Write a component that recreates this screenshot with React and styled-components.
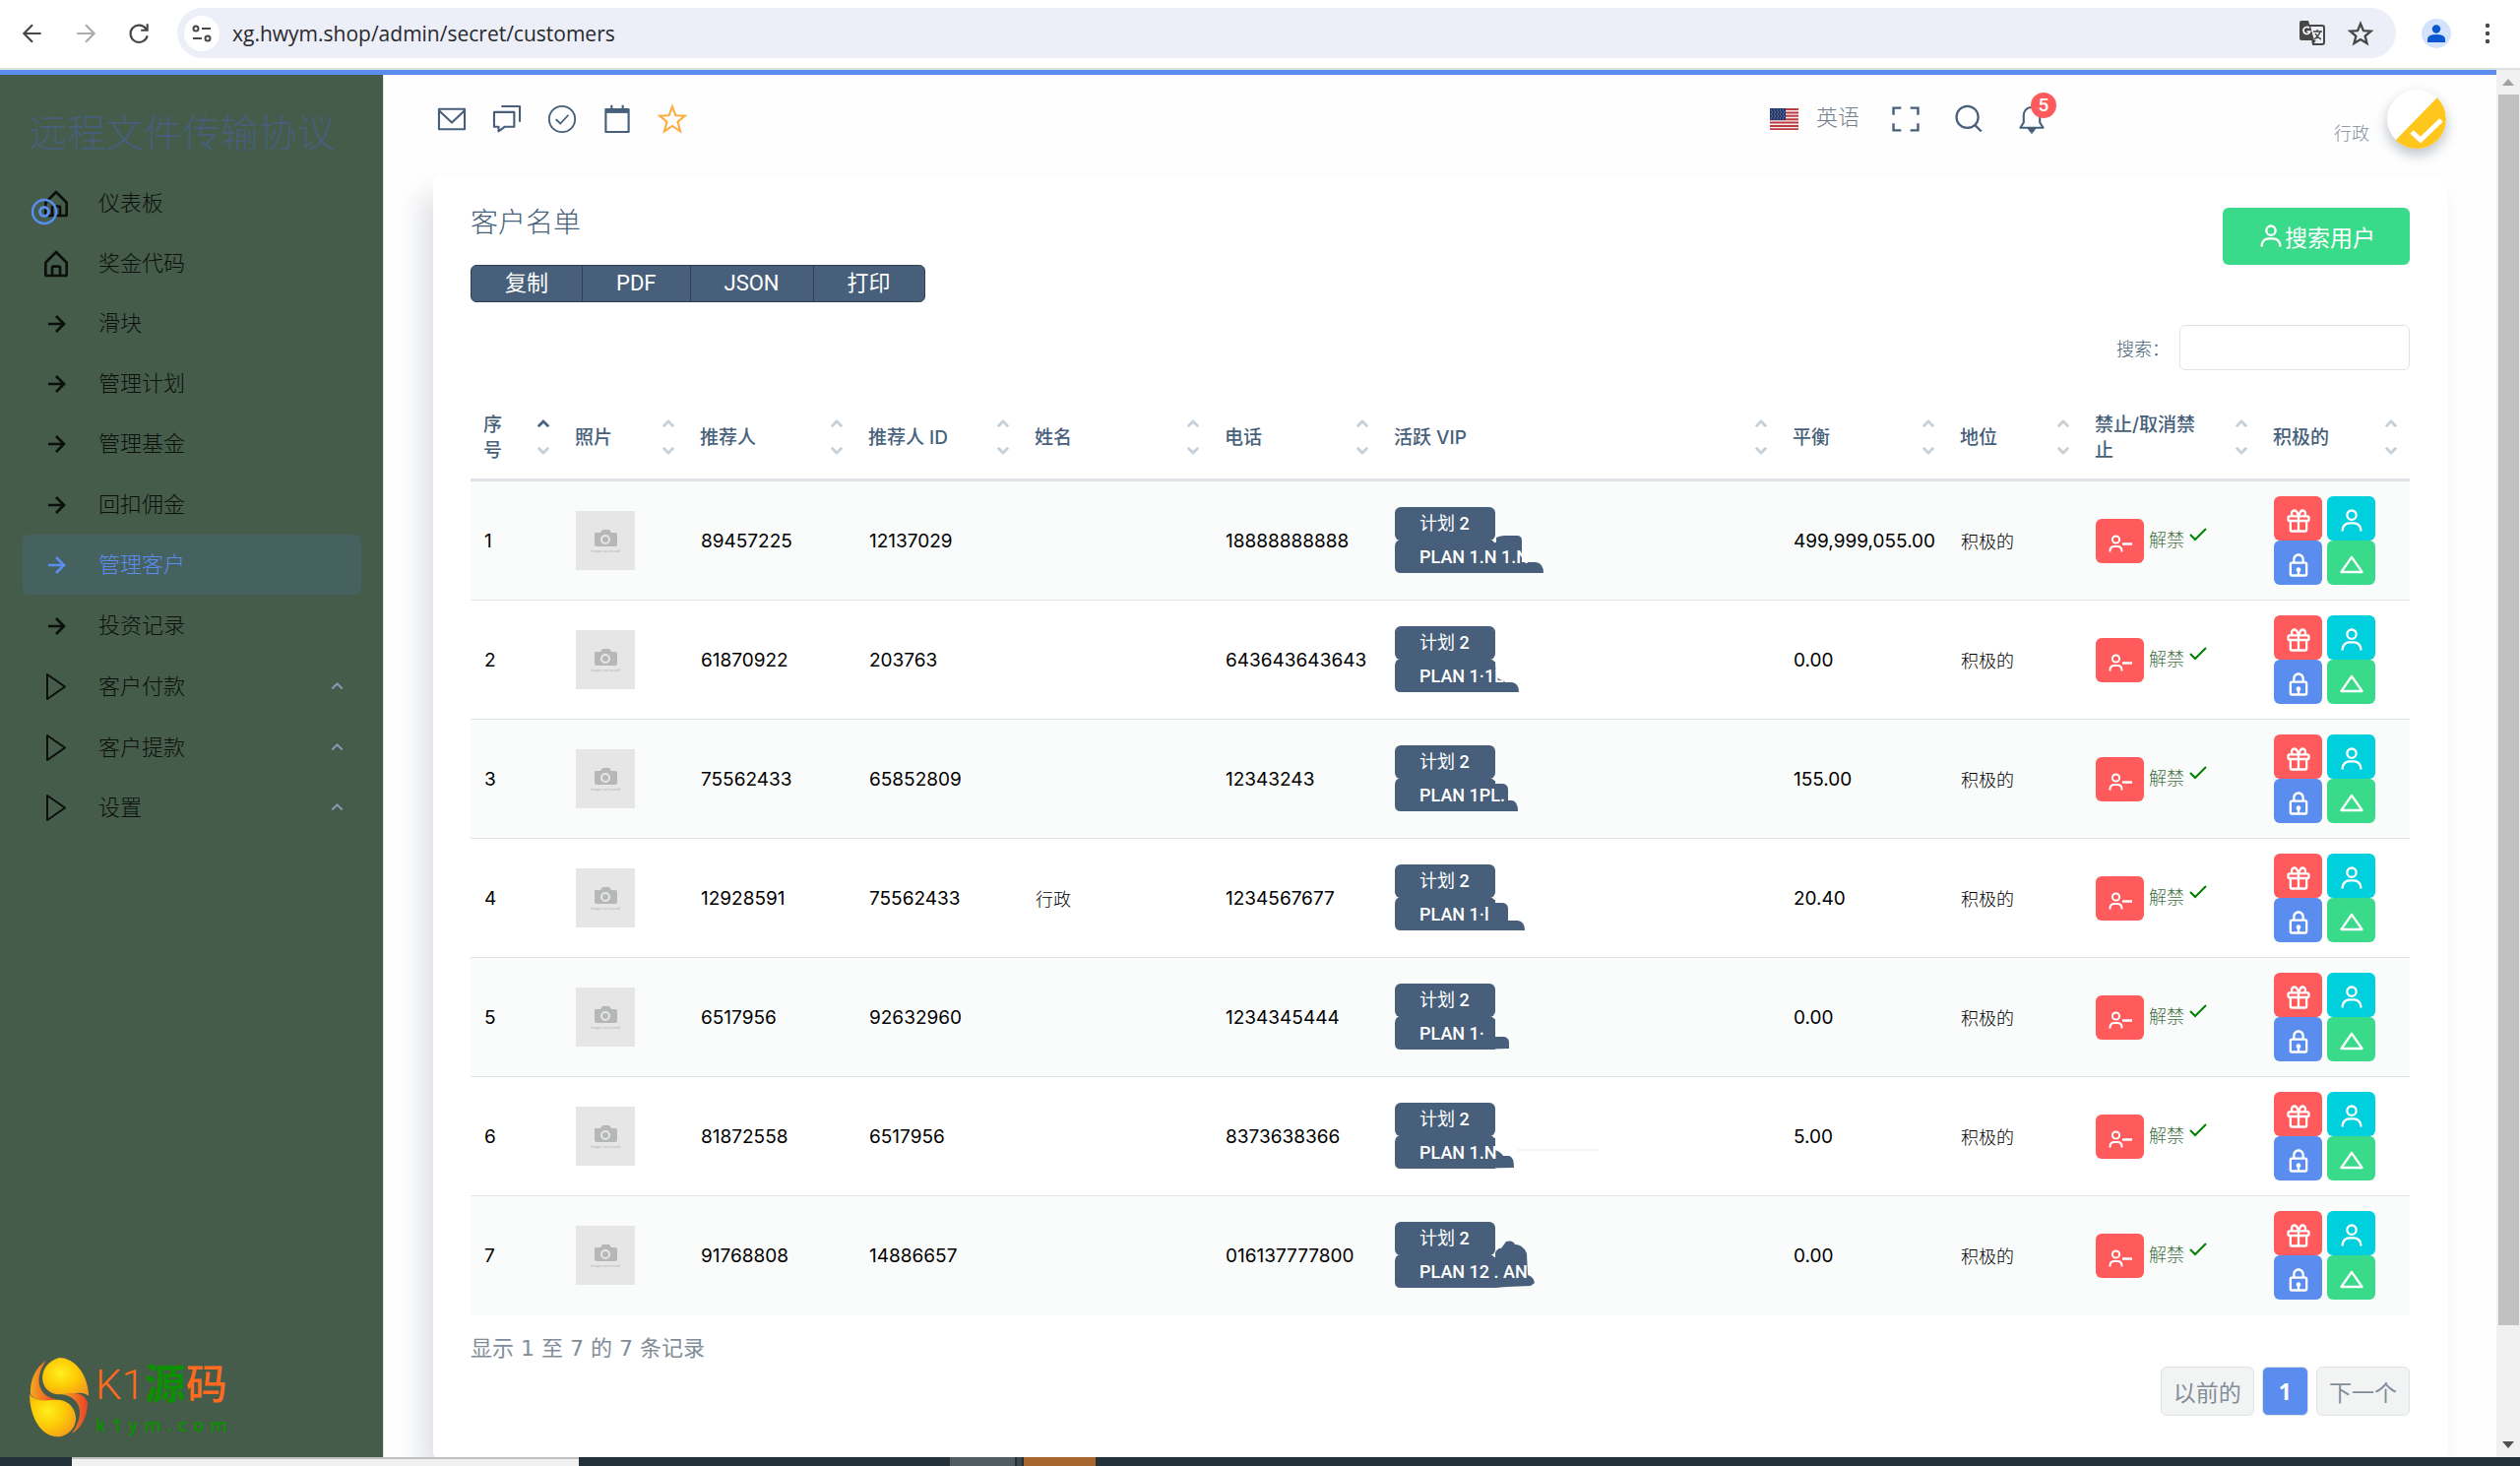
import React, { useState } from "react";
import styled, { createGlobalStyle } from "styled-components";
import {
  BiGift,
  BiUser,
  BiLock,
  BiUpArrow,
  BiRightArrowAlt,
  BiHomeAlt,
  BiChevronUp,
  BiChevronDown,
} from "react-icons/bi";

const GlobalStyle = createGlobalStyle`
  * {
    box-sizing: border-box;
  }
  body {
    margin: 0;
    background: #fff;
    color: #475f7b;
    font-family: Roboto, "Noto Sans CJK SC", sans-serif;
    font-size: 22px;
    font-weight: 300;
  }
  button,
  input {
    font: inherit;
    color: inherit;
  }
  button {
    border: 0;
    padding: 0;
    background: none;
    cursor: pointer;
  }
  a {
    color: inherit;
    text-decoration: none;
  }
  svg {
    display: block;
    flex-shrink: 0;
  }
`;

const Screen = styled.div`
  display: flex;
  flex-direction: column;
  height: 100vh;
  overflow: hidden;
`;

/* browser bar */
const BrowserBar = styled.header`
  display: flex;
  align-items: center;
  height: 71px;
  flex-shrink: 0;
  padding: 0 22px 2px 20px;
  background: #fff;
  border-bottom: 2px solid #dfe3e0;
  color: #474747;
`;
const BrowserButton = styled.button`
  display: flex;
  justify-content: center;
  width: 54px;
  margin-left: ${props => (props.first ? "-14px" : "0")};
  opacity: ${props => (props.disabled ? 0.45 : 1)};
`;
const AddressBar = styled.div`
  display: flex;
  align-items: center;
  flex: 1;
  height: 51px;
  margin-left: 12px;
  padding: 0 22px 0 7px;
  border-radius: 26px;
  background: #eceef8;
`;
const SiteInfo = styled.button`
  display: flex;
  align-items: center;
  justify-content: center;
  width: 36px;
  height: 36px;
  border-radius: 50%;
  background: #fff;
`;
const Address = styled.input`
  flex: 1;
  min-width: 0;
  margin-left: 13px;
  padding: 0;
  border: 0;
  outline: none;
  background: none;
  color: #28292c;
  font-family: "Open Sans", sans-serif;
  font-size: 21px;
  font-weight: 400;
`;
const AddressActions = styled.div`
  display: flex;
  align-items: center;
  gap: 22px;
`;
const Profile = styled.button`
  display: flex;
  align-items: center;
  justify-content: center;
  width: 30px;
  height: 30px;
  margin: 0 26px;
  border-radius: 50%;
  background: #d3e3fd;
`;

/* page frame */
const Viewport = styled.div`
  display: flex;
  flex: 1;
  min-height: 0;
`;
const Page = styled.div`
  display: flex;
  flex: 1;
  min-width: 0;
  border-top: 5px solid #5a8dee;
  background: #fefefe;
`;
const ScrollBar = styled.div`
  display: flex;
  flex-direction: column;
  align-items: center;
  width: 24px;
  background: #f0f0f0;
`;
const ScrollArrow = styled.button`
  display: flex;
  align-items: center;
  justify-content: center;
  height: 25px;
`;
const ScrollTrack = styled.div`
  flex: 1;
  align-self: stretch;
  padding: 0 1px 0 2px;
`;
const ScrollThumb = styled.div`
  height: 92%;
  background: #c1c1c1;
`;
const TaskBar = styled.footer`
  display: flex;
  height: 9px;
  flex-shrink: 0;
  padding-left: 73px;
  background: #22303a;
`;
const TaskItem = styled.div`
  width: ${props => props.width}px;
  margin-left: ${props => props.gap || 0}px;
  background: ${props => props.color};
  border-top: ${props => (props.edge ? "2px solid #bfbfbf" : "0")};
`;

/* sidebar */
const SideBar = styled.aside`
  position: relative;
  width: 390px;
  flex-shrink: 0;
  padding: 31px 22px 0 23px;
  background: #445c49;
  border-right: 1px solid #dfe3e7;
`;
const Brand = styled.h1`
  margin: 0 0 11px 6px;
  font-size: 39px;
  font-weight: 300;
  line-height: 58px;
  white-space: nowrap;
  color: #475f7b;
`;
const Menu = styled.ul`
  margin: 0;
  padding: 0;
  list-style: none;
`;
const MenuItem = styled.li`
  margin-top: ${props => (props.group ? "1px" : "0")};
`;
const MenuLink = styled.a`
  display: flex;
  align-items: center;
  height: 61px;
  padding: 0 12px 0 18px;
  border-radius: 6px;
  color: ${props => (props.active ? "#5a8dee" : "#0c0f0c")};
  background: ${props => (props.active ? "#466260" : "none")};
  span {
    flex: 1;
    margin-left: 28px;
    padding-bottom: 6px;
  }
`;
const MenuIcon = styled.i`
  display: flex;
  justify-content: center;
  width: 31px;
`;
const Pulse = styled.svg`
  position: absolute;
  left: 31px;
  top: 125px;
`;
const Watermark = styled.div`
  position: absolute;
  left: 29px;
  bottom: 20px;
  display: flex;
  gap: 6px;
`;
const WatermarkText = styled.div`
  display: flex;
  flex-direction: column;
  color: #ff6a1f;
  font-size: 42px;
  line-height: 58px;
  white-space: nowrap;
  b {
    color: #0c8f00;
    font-weight: 700;
  }
  strong {
    font-weight: 500;
  }
  small {
    display: flex;
    justify-content: space-between;
    color: #0c8f00;
    font-family: "Noto Sans", sans-serif;
    font-size: 18px;
    font-weight: 600;
    line-height: 22px;
  }
`;

/* top navigation */
const Main = styled.main`
  flex: 1;
  min-width: 0;
  padding: 0 49px 0 50px;
  overflow: hidden;
`;
const NavBar = styled.nav`
  display: flex;
  align-items: center;
  justify-content: space-between;
  height: 90px;
  margin-bottom: 13px;
  padding: 0 2px;
`;
const NavGroup = styled.div`
  display: flex;
  align-items: center;
  gap: ${props => props.gap}px;
`;
const NavButton = styled.button`
  position: relative;
  display: flex;
  align-items: center;
  gap: 18px;
  line-height: 28px;
  color: ${props => props.color || "#475f7b"};
  span {
    padding-bottom: 2px;
  }
`;
const Badge = styled.b`
  position: absolute;
  top: -10px;
  right: -8px;
  width: 26px;
  height: 26px;
  border-radius: 50%;
  background: #ff5b5c;
  color: #fff;
  font-size: 19px;
  font-weight: 500;
  line-height: 26px;
  text-align: center;
`;
const UserMenu = styled.button`
  display: flex;
  align-items: center;
  gap: 18px;
  margin-left: 260px;
`;
const Role = styled.span`
  padding-top: 26px;
  font-size: 18px;
  color: #828d99;
`;
const Avatar = styled.div`
  width: 60px;
  height: 60px;
  border-radius: 50%;
  overflow: hidden;
  background: #fff;
  box-shadow: 0 6px 12px 1px rgba(25, 42, 70, 0.25);
`;

/* customers card */
const Card = styled.section`
  padding: 32px 39px 44px 38px;
  border-radius: 7px;
  background: #fff;
  box-shadow: -12px 18px 27px 0 rgba(25, 42, 70, 0.13);
`;
const CardHead = styled.div`
  display: flex;
  align-items: flex-start;
  justify-content: space-between;
`;
const CardTitle = styled.h4`
  margin: 0 0 26px;
  font-size: 28px;
  font-weight: 300;
  line-height: 32px;
`;
const ButtonGroup = styled.div`
  display: flex;
  border: 1px solid #304156;
  border-radius: 6px;
  background: #475f7b;
`;
const ExportButton = styled.button`
  height: 36px;
  padding: 0 34px;
  color: #fff;
  font-weight: 400;
  line-height: 36px;
  & + & {
    border-left: 1px solid #304156;
  }
`;
const SearchUser = styled.button`
  display: flex;
  align-items: center;
  height: 58px;
  padding: 0 35px;
  border-radius: 6px;
  background: #39da8a;
  color: #fff;
  font-weight: 400;
  font-size: 23px;
`;
const Filter = styled.div`
  display: flex;
  align-items: center;
  justify-content: flex-end;
  gap: 10px;
  margin: 23px 0 28px;
  label {
    font-size: 18px;
  }
  input {
    width: 234px;
    height: 46px;
    padding: 0 12px;
    border: 1px solid #dfe3e7;
    border-radius: 6px;
    background: #fff;
  }
`;
const Table = styled.table`
  width: 100%;
  table-layout: fixed;
  border-collapse: separate;
  border-spacing: 0;
`;
const Th = styled.th`
  position: relative;
  padding: 15px 58px 15px 13px;
  border-bottom: 3px solid #dfe3e7;
  font-family: Inter, "Noto Sans CJK SC", sans-serif;
  font-size: 19px;
  font-weight: 500;
  line-height: 26px;
  text-align: left;
`;
const Sorter = styled.button`
  position: absolute;
  top: 15px;
  right: 7px;
  display: flex;
  flex-direction: column;
  gap: 2px;
  color: #c7cfd6;
  svg {
    stroke: currentColor;
    stroke-width: 1;
  }
  svg:first-child {
    color: ${props => (props.asc ? "#475f7b" : "#c7cfd6")};
  }
`;
const Row = styled.tr`
  background: ${props => (props.odd ? "#fafbfb" : "#fff")};
`;
const Td = styled.td`
  height: 121px;
  padding: 0 0 0 14px;
  border-bottom: 1px solid #dfe3e7;
  color: #000;
  font-family: Inter, "Noto Sans CJK SC", sans-serif;
  font-size: ${props => (props.soft ? 18 : 19)}px;
  font-weight: ${props => (props.soft ? 300 : 400)};
  white-space: nowrap;
  tr:last-child > & {
    border-bottom-color: transparent;
  }
`;
const Plans = styled.div`
  position: relative;
  display: flex;
  flex-direction: column;
  width: 102px;
`;
const Plan = styled.span`
  position: relative;
  height: 34px;
  padding-left: 25px;
  border-radius: 6px;
  background: ${props => (props.plain ? "none" : "#475f7b")};
  color: #fff;
  font-family: Roboto, "Noto Sans CJK SC", sans-serif;
  font-size: 18px;
  font-weight: ${props => (props.plain ? 500 : 400)};
  line-height: 33px;
  b {
    font-weight: 500;
  }
`;
const Smear = styled.svg`
  position: absolute;
  left: 0;
  top: 0;
  overflow: visible;
`;
const BanCell = styled.div`
  display: flex;
  align-items: center;
  gap: 5px;
  color: #3f6f3f;
  span {
    padding-bottom: 4px;
  }
  > svg {
    margin-bottom: 12px;
  }
`;
const Actions = styled.div`
  display: grid;
  grid-template-columns: repeat(2, 49px);
  column-gap: 5px;
`;
const IconButton = styled.button`
  display: flex;
  align-items: center;
  justify-content: center;
  width: 49px;
  height: 45px;
  padding-top: 5px;
  border-radius: 6px;
  background: ${props => props.color};
  color: #fff;
`;
const Info = styled.p`
  margin: 20px 0 4px;
  color: #828d99;
  font-family: "DejaVu Sans", "Noto Sans CJK SC", sans-serif;
  font-size: 22px;
  font-weight: 400;
  line-height: 28px;
`;
const Pagination = styled.div`
  display: flex;
  justify-content: flex-end;
  gap: 8px;
`;
const PageButton = styled.button`
  height: 50px;
  padding: 0 ${props => (props.current ? 16 : 12)}px;
  border: 1px solid #dfe3e7;
  border-radius: 6px;
  background: ${props => (props.current ? "#5a8dee" : "#f2f4f4")};
  color: ${props => (props.current ? "#fff" : "#828d99")};
  font-family: "Noto Sans", "Noto Sans CJK SC", sans-serif;
  font-size: 23px;
  font-weight: ${props => (props.current ? 700 : 400)};
`;

const menu = [
  { text: "仪表板", icon: "home" },
  { text: "奖金代码", icon: "home" },
  { text: "滑块", icon: "arrow" },
  { text: "管理计划", icon: "arrow" },
  { text: "管理基金", icon: "arrow" },
  { text: "回扣佣金", icon: "arrow", group: true },
  { text: "管理客户", icon: "arrow", active: true },
  { text: "投资记录", icon: "arrow", group: true },
  { text: "客户付款", icon: "play", group: true },
  { text: "客户提款", icon: "play", group: true },
  { text: "设置", icon: "play" },
];

const columns = [
  { title: "序号", width: 93 },
  { title: "照片", width: 127 },
  { title: "推荐人", width: 171 },
  { title: "推荐人 ID", width: 169 },
  { title: "姓名", width: 193 },
  { title: "电话", width: 172 },
  { title: "活跃 VIP", width: 405 },
  { title: "平衡", width: 170 },
  { title: "地位", width: 137 },
  { title: "禁止/取消禁止", width: 181 },
  { title: "积极的", width: 152 },
];

const customers = [
  {
    ref: "89457225", id: "12137029", name: "", phone: "18888888888", balance: "499,999,055.00", plan: "PLAN 1.N 1.N",
    smear: "M60 67V36H103V31Q106 29 112 29H124Q129 29 129 34V56H143Q151 57 151 67Z",
  },
  {
    ref: "61870922", id: "203763", name: "", phone: "643643643643", balance: "0.00", plan: "PLAN 1·1L",
    smear: "M60 67V36H102Q102 50 106 54Q112 56 112 57H119Q126 58 126 67Z",
  },
  {
    ref: "75562433", id: "65852809", name: "", phone: "12343243", balance: "155.00", plan: "PLAN 1PL.",
    smear: "M60 67V36H102V39H110Q115 40 115 45V56H119Q125 57 125 67Z",
  },
  {
    ref: "12928591", id: "75562433", name: "行政", phone: "1234567677", balance: "20.40", plan: "PLAN 1·l",
    smear: "M60 67V36H102V39H110Q115 40 115 45V57H125Q132 58 132 67Z",
  },
  {
    ref: "6517956", id: "92632960", name: "", phone: "1234345444", balance: "0.00", plan: "PLAN 1·",
    smear: "M60 67V36H102V54H111Q116 55 116 60V66Z",
  },
  {
    ref: "81872558", id: "6517956", name: "", phone: "8373638366", balance: "5.00", plan: "PLAN 1.N",
    smear: "M60 67V36H102V48Q108 50 110 54H116Q121 55 121 66Z",
    trace: true,
  },
  {
    ref: "91768808", id: "14886657", name: "", phone: "016137777800", balance: "0.00", plan: "PLAN 12   .  AN",
    smear: "M60 67V36H102V31Q106 26 108 27L113 20Q120 18 122 23Q130 23 134 32L135 54Q141 56 142 62L138 65L115 66L102 67Z",
  },
];

const Line = ({ size = 34, width = 1.5, children }) => (
  <svg width={size} height={size} viewBox="0 0 24 24" fill="none" stroke="currentColor" strokeWidth={width}>
    {children}
  </svg>
);

const menuIcons = {
  home: <BiHomeAlt size={32} />,
  arrow: <BiRightArrowAlt size={32} />,
  play: (
    <svg width="22" height="32" viewBox="0 0 22 32" fill="none" stroke="currentColor" strokeWidth="2">
      <path d="M2 3v25l18-12.500z" strokeLinejoin="round" />
    </svg>
  ),
};

const Photo = () => (
  <svg width="60" height="60" viewBox="0 0 60 60">
    <path fill="#e6e6e6" d="M0 0h60v60H0z" />
    <path fill="#b5b8b7" d="M20 22h5l2-3h7l2 3h4q2 0 2 2v10q0 2-2 2H21q-2 0-2-2V24q0-2 1-2z" />
    <circle cx="30" cy="29" r="4" fill="none" stroke="#e6e6e6" strokeWidth="2" />
    <text x="30" y="42" textAnchor="middle" fontSize="4" fontFamily="Roboto" fill="#b5b8b7">Image not found!</text>
  </svg>
);

const Flag = () => (
  <svg width="29" height="22" viewBox="0 0 29 22">
    <path fill="#f5f0f0" d="M0 0h29v22H0z" />
    <path stroke="#bd3d44" strokeWidth="2" d="M0 1h29M0 4.400h29M0 7.800h29M0 11.200h29M0 14.600h29M0 18h29M0 21.200h29" />
    <path fill="#24386b" d="M0 0h16v12H0z" />
    <path stroke="#8d98b5" strokeDasharray="1 2" d="M1 2h14M2 4h13M1 6h14M2 8h13M1 10h14" />
  </svg>
);

const UserMinus = () => (
  <svg width="24" height="18" viewBox="0 0 24 18" fill="none" stroke="#fff" strokeWidth="2">
    <circle cx="7.500" cy="5" r="3.600" />
    <path d="M1.500 17.500v-1q0-4.500 4.500-4.500h3q4.500 0 4.500 4.500v1" />
    <path d="M14 9.500h10" strokeWidth="2.500" />
  </svg>
);

const Browser = () => (
  <BrowserBar>
    <BrowserButton first aria-label="back">
      <Line size={26} width={2}><path d="M20 12H5M12 4l-8 8 8 8" /></Line>
    </BrowserButton>
    <BrowserButton disabled aria-label="forward">
      <Line size={26} width={2}><path d="M4 12h15M12 4l8 8-8 8" /></Line>
    </BrowserButton>
    <BrowserButton aria-label="reload">
      <Line size={26} width={2}><path d="M19 8a8 8 0 1 0 1 6M20 3v6h-6" /></Line>
    </BrowserButton>
    <AddressBar>
      <SiteInfo aria-label="site info">
        <Line size={24} width={2}>
          <circle cx="6" cy="7" r="2.500" />
          <path d="M12 7h9M3 17h9" />
          <circle cx="18" cy="17" r="2.500" />
        </Line>
      </SiteInfo>
      <Address aria-label="address" defaultValue="xg.hwym.shop/admin/secret/customers" />
      <AddressActions>
        <svg width="27" height="27" viewBox="0 0 27 27">
          <path d="M11 6h13q2 0 2 2v15q0 2-2 2h-9z" fill="none" stroke="#474747" strokeWidth="2" />
          <path d="M3 1h7l6 20H3q-2 0-2-2V3q0-2 2-2zM14 21h4l-4 5z" fill="#474747" />
          <path d="M11 8.500a3.500 3.500 0 1 0 .8 3.500H8.500" fill="none" stroke="#fff" strokeWidth="1.600" />
          <path d="M15 12h9M19 10v2M22 12q-1 4-6 8M17 14q2 4 6 6" fill="none" stroke="#474747" strokeWidth="1.400" />
        </svg>
        <Line size={28} width={2}>
          <path d="M12 3.500l2.500 6 6.500.5-5 4.300 1.600 6.300L12 17.200l-5.600 3.400L8 14.300 3 10l6.500-.5z" />
        </Line>
      </AddressActions>
    </AddressBar>
    <Profile aria-label="profile">
      <svg width="18" height="18" viewBox="0 0 18 18" fill="#0b57d0">
        <circle cx="9" cy="4.500" r="4.200" />
        <path d="M0 18v-3q0-5 9-5t9 5v3z" />
      </svg>
    </Profile>
    <button aria-label="menu">
      <svg width="22" height="24" viewBox="0 0 22 24" fill="#474747">
        <circle cx="11" cy="4" r="2.200" />
        <circle cx="11" cy="12" r="2.200" />
        <circle cx="11" cy="20" r="2.200" />
      </svg>
    </button>
  </BrowserBar>
);

const Side = () => (
  <SideBar>
    <Brand>远程文件传输协议</Brand>
    <Menu>
      {menu.map(item => (
        <MenuItem key={item.text} group={item.group}>
          <MenuLink href="#" active={item.active}>
            <MenuIcon>{menuIcons[item.icon]}</MenuIcon>
            <span>{item.text}</span>
            {item.icon === "play" && <BiChevronUp size={25} color="#8a99b5" />}
          </MenuLink>
        </MenuItem>
      ))}
    </Menu>
    <Pulse width="28" height="28" viewBox="0 0 28 28" fill="none" stroke="#5a8dee">
      <circle cx="14" cy="14" r="12" strokeWidth="2.500" />
      <circle cx="14" cy="14" r="4.500" strokeWidth="3" />
    </Pulse>
    <Watermark>
      <svg width="62" height="82" viewBox="0 0 62 82">
        <defs>
          <radialGradient id="gold" cx="0.4" cy="0.4" r="0.7">
            <stop offset="0" stopColor="#fff01e" />
            <stop offset="0.5" stopColor="#fccb06" />
            <stop offset="1" stopColor="#f49a1c" />
          </radialGradient>
          <linearGradient id="flame" x1="0" x2="1">
            <stop offset="0" stopColor="#f7a81c" />
            <stop offset="1" stopColor="#e8402a" />
          </linearGradient>
        </defs>
        <path fill="url(#gold)" d="M31 1C48 1 61 20 61 40 54 33 40 40 28 38 10 35 8 8 31 1z" />
        <path fill="url(#flame)" d="M18 4C6 20 8 40 28 43 18 47 6 45 2 38 1 25 7 10 18 4z" />
        <path fill="url(#gold)" d="M1 38C8 48 22 43 32 44 50 46 56 74 33 81 14 84 1 62 1 38z" />
        <path fill="url(#flame)" d="M34 38C46 36 57 36 60 47 60 60 54 72 44 78 56 62 56 42 34 38z" />
      </svg>
      <WatermarkText>
        <div>K1<b>源</b><strong>码</strong></div>
        <small>{"k1ym.com".split("").map((c, i) => <span key={i}>{c}</span>)}</small>
      </WatermarkText>
    </Watermark>
  </SideBar>
);

const TopNav = () => (
  <NavBar>
    <NavGroup gap={22}>
      <NavButton aria-label="mail">
        <Line><path d="M2.800 4.800h18.400v14.400H2.800zM3 6l9 8.500L21 6" strokeLinejoin="round" /></Line>
      </NavButton>
      <NavButton aria-label="chat">
        <Line><path d="M8 2.800h13.200V14M2.800 7h14.400v10.500h-7L6 20.800v-3.300H2.800z" strokeLinejoin="round" /></Line>
      </NavButton>
      <NavButton aria-label="tasks">
        <Line width={1.300}><circle cx="12" cy="12" r="9.300" /><path d="M7.500 12.200l3.300 3L16.500 9" /></Line>
      </NavButton>
      <NavButton aria-label="calendar">
        <Line><path d="M3.800 5h16.400v16.200H3.800zM8 2v3M16 2v3" strokeLinejoin="round" /><path d="M4 6.200h16" strokeWidth="3" /></Line>
      </NavButton>
      <NavButton aria-label="starred" color="#fdac41">
        <Line><path d="M12 3l2.400 6.400 6.600.3-5.100 4.200 1.800 6.800-5.700-3.800-5.700 3.800 1.800-6.800L3 9.700l6.600-.3z" /></Line>
      </NavButton>
    </NavGroup>
    <NavGroup gap={30}>
      <NavButton color="#727e8c"><Flag /><span>英语</span></NavButton>
      <NavButton aria-label="fullscreen">
        <Line width={1.700}><path d="M3.200 9V4h5.500M15.300 4h5.500v5M20.800 15v5h-5.500M8.700 20H3.200v-5" /></Line>
      </NavButton>
      <NavButton aria-label="search">
        <Line width={1.600}><circle cx="11" cy="10.500" r="7.800" /><path d="M16.500 16.300l4.500 4.500" /></Line>
      </NavButton>
      <NavButton aria-label="notifications">
        <Line>
          <path d="M12 3.500c-4 0-5.800 3-5.800 6v5L3.800 18.200h16.400L17.800 14.500v-5c0-3-1.800-6-5.800-6z" strokeLinejoin="round" />
          <path d="M10 19h4l-2 2.500z" fill="currentColor" />
        </Line>
        <Badge>5</Badge>
      </NavButton>
      <UserMenu>
        <Role>行政</Role>
        <Avatar>
          <svg width="60" height="60" viewBox="0 0 60 60">
            <path fill="#ffc61c" d="M52 7L8 52q10 10 28 8 24-6 24-30-1-15-8-23z" />
            <path fill="none" stroke="#fff" strokeWidth="5" d="M25 43l9 8 21-20" />
          </svg>
        </Avatar>
      </UserMenu>
    </NavGroup>
  </NavBar>
);

const CustomerRow = ({ customer, index }) => (
  <Row odd={index % 2 === 0}>
    <Td>{index + 1}</Td>
    <Td><Photo /></Td>
    <Td>{customer.ref}</Td>
    <Td>{customer.id}</Td>
    <Td soft>{customer.name}</Td>
    <Td>{customer.phone}</Td>
    <Td>
      <Plans>
        <Smear width="102" height="67">
          <path d="M6 33H96Q102 34 102 40V67H6Q0 67 0 61V40Q0 34 6 33Z" fill="#475f7b" />
          <path d={customer.smear} fill="#475f7b" />
          {customer.trace && <path d="M124 48H207" stroke="#e8ebee" />}
        </Smear>
        <Plan>计划 <b>2</b></Plan>
        <Plan plain>{customer.plan}</Plan>
      </Plans>
    </Td>
    <Td>{customer.balance}</Td>
    <Td soft>积极的</Td>
    <Td soft>
      <BanCell>
        <IconButton color="#ff5b5c" aria-label="ban"><UserMinus /></IconButton>
        <span>解禁</span>
        <svg width="18" height="14" viewBox="0 0 18 14" fill="none" stroke="green" strokeWidth="2">
          <path d="M1 7l5 5L17 1" />
        </svg>
      </BanCell>
    </Td>
    <Td>
      <Actions>
        <IconButton color="#ff5b5c" aria-label="gift"><BiGift size={28} /></IconButton>
        <IconButton color="#00cfdd" aria-label="user"><BiUser size={28} /></IconButton>
        <IconButton color="#5a8dee" aria-label="lock"><BiLock size={28} /></IconButton>
        <IconButton color="#39da8a" aria-label="upgrade"><BiUpArrow size={28} /></IconButton>
      </Actions>
    </Td>
  </Row>
);

const Customers = () => {
  const [search, setSearch] = useState("");
  return (
    <Card>
      <CardHead>
        <div>
          <CardTitle>客户名单</CardTitle>
          <ButtonGroup>
            <ExportButton>复制</ExportButton>
            <ExportButton>PDF</ExportButton>
            <ExportButton>JSON</ExportButton>
            <ExportButton>打印</ExportButton>
          </ButtonGroup>
        </div>
        <SearchUser><BiUser size={28} />搜索用户</SearchUser>
      </CardHead>
      <Filter>
        <label htmlFor="search">搜索：</label>
        <input id="search" value={search} onChange={e => setSearch(e.target.value)} />
      </Filter>
      <Table>
        <colgroup>
          {columns.map(column => <col key={column.title} width={column.width} />)}
        </colgroup>
        <thead>
          <tr>
            {columns.map((column, index) => (
              <Th key={column.title}>
                {column.title}
                <Sorter asc={index === 0} aria-label={column.title}>
                  <BiChevronUp size={24} />
                  <BiChevronDown size={24} />
                </Sorter>
              </Th>
            ))}
          </tr>
        </thead>
        <tbody>
          {customers.map((customer, index) => (
            <CustomerRow key={customer.ref} customer={customer} index={index} />
          ))}
        </tbody>
      </Table>
      <Info>显示 1 至 7 的 7 条记录</Info>
      <Pagination>
        <PageButton>以前的</PageButton>
        <PageButton current>1</PageButton>
        <PageButton>下一个</PageButton>
      </Pagination>
    </Card>
  );
};

const App = () => (
  <Screen>
    <GlobalStyle />
    <Browser />
    <Viewport>
      <Page>
        <Side />
        <Main>
          <TopNav />
          <Customers />
        </Main>
      </Page>
      <ScrollBar>
        <ScrollArrow aria-label="scroll up">
          <svg width="12" height="7" viewBox="0 0 12 7" fill="#a0a0a0"><path d="M0 7l6-7 6 7z" /></svg>
        </ScrollArrow>
        <ScrollTrack>
          <ScrollThumb />
        </ScrollTrack>
        <ScrollArrow aria-label="scroll down">
          <svg width="12" height="7" viewBox="0 0 12 7" fill="#505050"><path d="M0 0l6 7 6-7z" /></svg>
        </ScrollArrow>
      </ScrollBar>
    </Viewport>
    <TaskBar>
      <TaskItem width={515} color="#f1f1f1" edge />
      <TaskItem width={66} gap={377} color="#515c62" />
      <TaskItem width={5} gap={2} color="#3c474d" />
      <TaskItem width={73} gap={2} color="#a9652e" />
    </TaskBar>
  </Screen>
);

export default App;
